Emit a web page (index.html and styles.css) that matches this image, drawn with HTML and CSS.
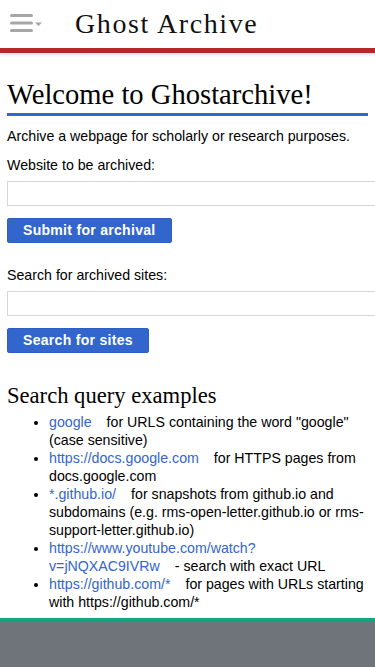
FILE: index.html
```html
<!DOCTYPE html>
<html>
<head>
<meta charset="utf-8">
<link rel="stylesheet" href="styles.css">
</head>
<body>
<header class="topbar">
  <div class="menu">
    <svg width="34" height="22" viewBox="0 0 34 22">
      <rect x="0" y="0" width="23" height="3" rx="1.5" fill="#a6a6a6"/>
      <rect x="0" y="7.5" width="23" height="3" rx="1.5" fill="#a6a6a6"/>
      <rect x="0" y="15" width="23" height="3" rx="1.5" fill="#a6a6a6"/>
      <path d="M25 8.5 L32 8.5 L28.5 12 Z" fill="#a6a6a6"/>
    </svg>
  </div>
  <div class="brand">Ghost Archive</div>
</header>
<main class="content">
  <h1 class="welcome">Welcome to Ghostarchive!</h1>
  <p class="intro">Archive a webpage for scholarly or research purposes.</p>
  <form class="form">
    <label class="label">Website to be archived:</label>
    <input class="field" type="text">
    <button class="btn" type="button">Submit for archival</button>
  </form>
  <form class="form second">
    <label class="label">Search for archived sites:</label>
    <input class="field" type="text">
    <button class="btn" type="button">Search for sites</button>
  </form>
  <h2 class="examples">Search query examples</h2>
  <ul class="list">
    <li><a class="link">google</a>for URLS containing the word "google" (case sensitive)</li>
    <li><a class="link">https://docs.google.com</a>for HTTPS pages from docs.google.com</li>
    <li><a class="link">*.github.io/</a>for snapshots from github.io and subdomains (e.g. rms-open-letter.github.io or rms-support-letter.github.io)</li>
    <li><a class="link">https://www.youtube.com/watch?v=jNQXAC9IVRw</a>- search with exact URL</li>
    <li><a class="link">https://github.com/*</a>for pages with URLs starting with https://github.com/*</li>
  </ul>
</main>
<footer class="footer"></footer>
</body>
</html>
```
FILE: styles.css
```css
* { box-sizing: border-box; }
html, body { margin: 0; padding: 0; }
body {
  font-family: "Liberation Sans", Arial, sans-serif;
  color: #000;
  background: #fff;
  width: 375px;
  overflow-x: hidden;
}
.topbar {
  height: 53px;
  display: flex;
  align-items: flex-start;
  border-bottom: 5px solid #b8262b;
  box-shadow: 0 2px 3px rgba(0,0,0,0.12);
  position: relative;
}
.menu {
  width: 75px;
  padding: 14px 0 0 10px;
  display: flex;
}
.menu svg { display: block; }
.brand {
  font-family: "Liberation Serif", "Times New Roman", serif;
  font-size: 28px;
  letter-spacing: 1.6px;
  line-height: 1;
  padding-top: 10px;
  color: #111;
}
.content {
  padding: 0 0 0 7px;
}
.welcome {
  font-family: "Liberation Serif", "Times New Roman", serif;
  font-weight: normal;
  font-size: 28.6px;
  line-height: 1;
  margin: 28px 0 0 0;
  padding-bottom: 3px;
  border-bottom: 3px solid #3366cc;
  width: 361px;
}
.intro {
  font-size: 14.2px;
  margin: 11px 0 0 0;
  line-height: 18px;
}
.form {
  display: flex;
  flex-direction: column;
  align-items: flex-start;
}
.label {
  font-size: 14.2px;
  line-height: 18px;
  margin-top: 11px;
}
.second .label { margin-top: 23px; }
.field {
  width: 380px;
  height: 25px;
  margin: 7px 0 0 0;
  border: 1px solid #d6d6d6;
  border-radius: 0;
  padding: 0;
}
.btn {
  margin-top: 12px;
  height: 25px;
  background: #3366cc;
  color: #fff;
  border: 1px solid #2d5fc4;
  border-radius: 2px;
  font-family: "Liberation Sans", Arial, sans-serif;
  font-weight: bold;
  font-size: 14px;
  padding: 0 15px;
  letter-spacing: 0.3px;
}
.examples {
  font-family: "Liberation Serif", "Times New Roman", serif;
  font-weight: normal;
  font-size: 22.6px;
  line-height: 1;
  margin: 32px 0 0 0;
}
.list {
  margin: 6px 0 0 0;
  padding-left: 42px;
  font-size: 14.2px;
  line-height: 18px;
}
.link {
  color: #3366cc;
  margin-right: 15px;
}
.footer {
  height: 50px;
  margin-top: 7px;
  border-top: 3px solid #12a783;
  background: #6f737a;
}
```
